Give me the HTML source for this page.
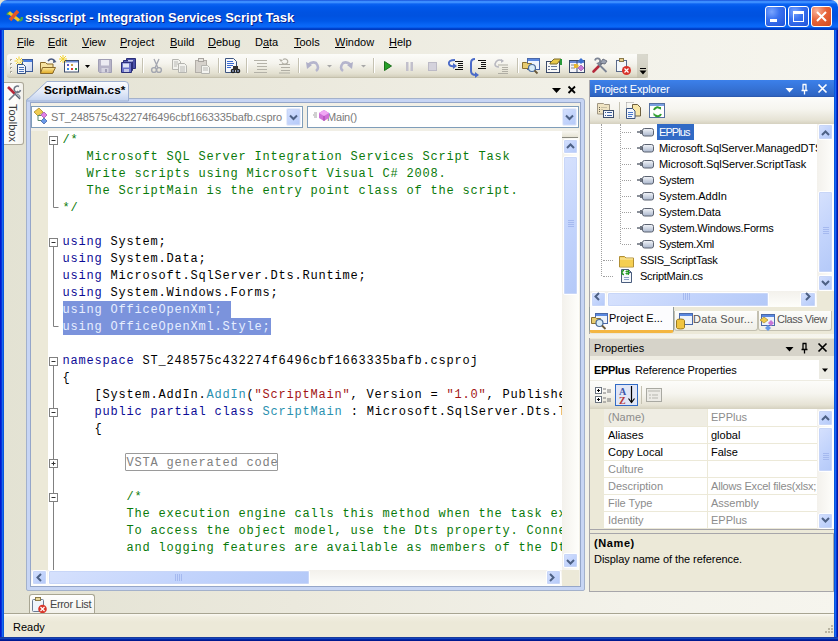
<!DOCTYPE html>
<html><head><meta charset="utf-8">
<style>
*{margin:0;padding:0;box-sizing:border-box}
html,body{width:838px;height:641px;overflow:hidden;background:linear-gradient(to right,#e3e2d3 0,#ebe9dd 35%,#f3f2ea 75%,#f6f5ee 100%)}
body{position:relative;font-family:"Liberation Sans",sans-serif;font-size:11px;color:#000}
.a{position:absolute}
.t{position:absolute;white-space:pre;line-height:11px;font-size:11px}
/* title bar */
#tb{left:0;top:0;width:838px;height:30px;border-radius:7px 7px 0 0;
background:linear-gradient(to bottom,#0a3bcc 0px,#3b8dff 1px,#3c8eff 2.5px,#0b63f2 4px,#0058ea 7px,#0053e2 12px,#0052e0 16px,#0058e8 21px,#0866f6 25px,#0a68f8 27px,#0043cf 28.5px,#0038b8 30px)}
#tt{left:25px;top:11px;font-size:13px;line-height:13px;font-weight:bold;color:#fff;text-shadow:1px 1px 0 #0a1e8a}
.wb{top:6px;width:21px;height:21px;border:1px solid #fff;border-radius:3px;
background:radial-gradient(circle at 30% 25%,#7aa5ff 0,#3a72f0 40%,#1f52d8 100%)}
#bl{left:0;top:30px;width:4px;height:611px;background:linear-gradient(to right,#0019cf 0,#0019cf 1px,#0831d9 1px,#0831d9 2px,#166aee 2px,#166aee 3px,#0855dd 3px)}
#br{left:834px;top:30px;width:4px;height:611px;background:linear-gradient(to right,#0855dd 0,#0855dd 1px,#166aee 1px,#166aee 2px,#0831d9 2px,#0831d9 3px,#001ca0 3px)}
#bb{left:0;top:637px;width:838px;height:4px;background:linear-gradient(to bottom,#1a3c9e 0,#1a3c9e 1px,#1244bc 1px,#1244bc 2px,#0224a4 2px,#0224a4 3px,#001890 3px)}
/* code */
#code{left:62.5px;top:131px;width:499.5px;height:438px;overflow:hidden;font-family:"Liberation Mono",monospace;font-size:12px;letter-spacing:0.8px;line-height:18px;white-space:pre;color:#000}
.c{color:#0a7a0a}.k{color:#0c0c96}.s{color:#a31515}.ty{color:#2b91af}
.sel{background:#7b93dc;color:#e6eeff;display:inline-block;height:17px;vertical-align:top}
.ln{height:17px;overflow:visible}
.sb{position:absolute;border-radius:2px;border:1px solid #fff;background:linear-gradient(135deg,#d6e1fd 0%,#c3d4fc 50%,#b4c9f8 100%);box-shadow:inset 0 0 0 1px #c8d6f8}
</style></head><body>
<!-- title bar -->
<div id="tb" class="a"></div>
<div id="tt" class="t">ssisscript - Integration Services Script Task</div>
<div class="a wb" style="left:765px"></div>
<div class="a wb" style="left:788px"></div>
<div class="a wb" style="left:811px;background:radial-gradient(circle at 25% 20%,#f8b49c 0,#e8643a 45%,#d24a1e 100%)"></div>
<svg class="a" style="left:765px;top:6px" width="68" height="21">
 <rect x="5" y="13" width="7" height="3" fill="#fff"/>
 <rect x="28.5" y="5.5" width="10" height="10" fill="none" stroke="#fff"/><rect x="28" y="5" width="11" height="3" fill="#fff"/>
 <path d="M52,6 l9,9 M61,6 l-9,9" stroke="#fff" stroke-width="2"/>
</svg>
<div id="bl" class="a"></div><div id="br" class="a"></div><div id="bb" class="a"></div>

<!-- menu bar -->

<div class="t" style="left:17px;top:37px">File</div>
<div class="t" style="left:48px;top:37px">Edit</div>
<div class="t" style="left:82px;top:37px">View</div>
<div class="t" style="left:120px;top:37px">Project</div>
<div class="t" style="left:170px;top:37px">Build</div>
<div class="t" style="left:208px;top:37px">Debug</div>
<div class="t" style="left:255px;top:37px">Data</div>
<div class="t" style="left:294px;top:37px">Tools</div>
<div class="t" style="left:335px;top:37px">Window</div>
<div class="t" style="left:389px;top:37px">Help</div>

<div class="a" style="left:17px;top:47px;width:6.5px;height:1px;background:#000"></div><div class="a" style="left:48px;top:47px;width:7px;height:1px;background:#000"></div><div class="a" style="left:82px;top:47px;width:7px;height:1px;background:#000"></div><div class="a" style="left:120px;top:47px;width:7px;height:1px;background:#000"></div><div class="a" style="left:170px;top:47px;width:7px;height:1px;background:#000"></div><div class="a" style="left:208px;top:47px;width:8px;height:1px;background:#000"></div><div class="a" style="left:263px;top:47px;width:6px;height:1px;background:#000"></div><div class="a" style="left:294px;top:47px;width:6.5px;height:1px;background:#000"></div><div class="a" style="left:335px;top:47px;width:10px;height:1px;background:#000"></div><div class="a" style="left:389px;top:47px;width:8px;height:1px;background:#000"></div>
<svg class="a" style="left:5px;top:8px" width="18" height="16">
<path d="M2.5,7 q1,-3 3,-2" stroke="#4aa84a" stroke-width="2.5" fill="none"/>
<path d="M14,12 q3,1 3,-3" stroke="#4aa84a" stroke-width="2.5" fill="none"/>
<path d="M4,4.5 l10,8" stroke="#f0c828" stroke-width="3.2"/>
<path d="M5,12 l8,-9" stroke="#e0582a" stroke-width="3.4"/>
</svg>
<!-- toolbar strip -->
<div class="a" style="left:7px;top:54px;width:641px;height:24px;border-radius:3px 4px 4px 3px;background:linear-gradient(to bottom,#fcfcf9 0,#f5f4ee 40%,#e3e0d0 85%,#d3cfbc 100%);border-bottom:1px solid #c4c0ac"></div>

<svg class="a" style="left:0;top:54px" width="660" height="24">
<defs>
 <linearGradient id="fy" x1="0" y1="0" x2="0" y2="1"><stop offset="0" stop-color="#fbe9a0"/><stop offset="1" stop-color="#e0a820"/></linearGradient>
 <linearGradient id="wg" x1="0" y1="0" x2="1" y2="1"><stop offset="0" stop-color="#ffffff"/><stop offset="1" stop-color="#c8d4ee"/></linearGradient>
</defs>
<!-- grip -->
<g fill="#a8a698"><rect x="10" y="5" width="2" height="2"/><rect x="10" y="9" width="2" height="2"/><rect x="10" y="13" width="2" height="2"/><rect x="10" y="17" width="2" height="2"/></g>
<g fill="#fff"><rect x="11" y="6" width="1" height="1"/><rect x="11" y="10" width="1" height="1"/><rect x="11" y="14" width="1" height="1"/><rect x="11" y="18" width="1" height="1"/></g>
<!-- new project -->
<rect x="22.5" y="5.5" width="10" height="12" fill="url(#wg)" stroke="#3b5a9a"/><rect x="23" y="6" width="9" height="2" fill="#4a7ee0"/>
<path d="M16,4 l6,6 M22,4 l-6,6 M19,2.5 v9 M14.5,7 h9" stroke="#f2d230" stroke-width="1"/><circle cx="19" cy="7" r="1.5" fill="#fff6b0"/>
<path d="M17.5,10.5 h6 l2,2 v7 h-8z" fill="#f2f6fc" stroke="#34507e"/><path d="M19,13.5 h5 M19,15.5 h5 M19,17.5 h5" stroke="#4a70b8"/>
<!-- open -->
<path d="M40.5,8.5 h5 l1.5,1.5 h6 v9 h-12.5z" fill="#f6e2a0" stroke="#8a6a2a"/>
<path d="M42.5,13.5 h13 l-3,6 h-12z" fill="url(#fy)" stroke="#8a6a2a"/>
<path d="M48,7 q3,-4 7,0" stroke="#4a5a80" stroke-width="1.5" fill="none"/><path d="M53.5,5 l3,3 l-3.5,1z" fill="#4a5a80"/>
<!-- add item -->
<rect x="64.5" y="6.5" width="14" height="11.5" fill="#fcfcff" stroke="#3a4a6a"/><rect x="65" y="7" width="13" height="1.5" fill="#6f8fd8"/>
<rect x="67" y="10" width="2" height="2" fill="#5a58c8"/><rect x="71" y="10" width="2" height="2" fill="#c8a048"/><rect x="67" y="14" width="2" height="2" fill="#3a8ae0"/><rect x="71" y="14" width="2" height="2" fill="#d83a2a"/><rect x="75" y="14" width="2" height="2" fill="#2a9a4a"/>
<path d="M60,2 l6,6 M66,2 l-6,6 M63,1 v8 M59,5 h8" stroke="#f2d230" stroke-width="1"/>
<path d="M85,11 h5 l-2.5,3z" fill="#000"/>
<!-- save disabled -->
<path d="M98.5,5.5 h13 v13 h-12 l-1,-1z" fill="#b7b4c8" stroke="#a09eb4"/><rect x="101" y="6" width="8" height="5.5" fill="#ecebf2"/><rect x="101.5" y="14" width="7" height="4.5" fill="#d6d4e0"/><rect x="105" y="15" width="2" height="3" fill="#a09eb4"/>
<!-- save all -->
<path d="M126.5,4.5 h9 v10 h-9z" fill="#4a50a8" stroke="#2a2e78"/><path d="M123.5,6.5 h9 v10 h-9z" fill="#5a60b8" stroke="#2a2e78"/><path d="M121.5,8.5 h10 v10 h-10z" fill="#6a72c8" stroke="#2a2e78"/>
<rect x="123" y="9.5" width="6" height="4" fill="#dfe4f6"/><rect x="124" y="15" width="5" height="3" fill="#c4c8e8"/><rect x="128" y="6" width="5" height="1.5" fill="#c8ccec"/>
<!-- sep -->
<g fill="#c5c2b2"><rect x="142" y="4" width="1" height="15"/><rect x="218" y="4" width="1" height="15"/><rect x="246" y="4" width="1" height="15"/><rect x="298" y="4" width="1" height="15"/><rect x="373" y="4" width="1" height="15"/><rect x="517" y="4" width="1" height="15"/></g>
<g fill="#fff"><rect x="143" y="4" width="1" height="15"/><rect x="219" y="4" width="1" height="15"/><rect x="247" y="4" width="1" height="15"/><rect x="299" y="4" width="1" height="15"/><rect x="374" y="4" width="1" height="15"/><rect x="518" y="4" width="1" height="15"/></g>
<!-- cut -->
<path d="M154,5 l4,9 M159,5 l-4,9" stroke="#a3a6b0" stroke-width="1.3"/><circle cx="154" cy="16" r="2.4" fill="none" stroke="#a3a6b0" stroke-width="1.4"/><circle cx="159" cy="16" r="2.4" fill="none" stroke="#a3a6b0" stroke-width="1.4"/>
<!-- copy -->
<path d="M172.5,5.5 h6 l2,2 v8 h-8z" fill="#f2f2ee" stroke="#b5b5b0"/><path d="M178.5,9.5 h6 l2,2 v7 h-8z" fill="#f2f2ee" stroke="#b5b5b0"/><path d="M174,8 h4 M174,10 h4 M174,12 h3 M180,13 h5 M180,15 h5 M180,17 h5" stroke="#b8b8b4"/>
<!-- paste -->
<rect x="195.5" y="6.5" width="11" height="12" fill="#d6d2cc" stroke="#b2aea8"/><rect x="198.5" y="4.5" width="5" height="3" fill="#e8e6e0" stroke="#a8a4a0"/><path d="M201.5,11.5 h6 l2,2 v6 h-8z" fill="#f4f4f0" stroke="#b5b5b0"/><path d="M203,14 h5 M203,16 h5" stroke="#b8b8b4"/>
<!-- find in files -->
<path d="M225.5,4.5 h8 l3,3 v11 h-11z" fill="#f6f8fc" stroke="#3d5580"/><path d="M227,7.5 h6 M227,9.5 h7 M227,11.5 h6 M227,13.5 h4" stroke="#3a6ad0" stroke-width="1"/>
<circle cx="233" cy="17" r="2.3" fill="#222"/><circle cx="238" cy="17" r="2.3" fill="#222"/><rect x="233" y="12" width="5" height="4" fill="#333"/><circle cx="233" cy="17" r="1" fill="#8a9ac0"/><circle cx="238" cy="17" r="1" fill="#8a9ac0"/>
<!-- comment -->
<path d="M254,6.5 h13 M257,9.5 h10 M257,12.5 h10 M257,15.5 h10 M254,18.5 h13" stroke="#b4b2a8" stroke-width="1"/>
<!-- uncomment -->
<path d="M283,5.5 a3,2.5 0 1 1 -1,3" stroke="#b0aea4" stroke-width="1.2" fill="none"/><path d="M279,5 l2,3 l2,-2z" fill="#b0aea4"/><path d="M279,10.5 h11 M281,13.5 h9 M281,16.5 h9 M279,19 h11" stroke="#b0aea4" stroke-width="1.2"/>
<!-- undo / redo -->
<path d="M316,17 q4,-3 0,-8 q-4,-2 -8,2" stroke="#b5b5cd" stroke-width="2.6" fill="none"/><path d="M306,8 l1,7 l5,-4z" fill="#b0b0c8"/>
<path d="M327,11 h5 l-2.5,2.5z" fill="#a8a8a8"/>
<path d="M343,17 q-4,-3 0,-8 q4,-2 8,2" stroke="#b5b5cd" stroke-width="2.6" fill="none"/><path d="M353,8 l-1,7 l-5,-4z" fill="#b0b0c8"/>
<path d="M361,11 h5 l-2.5,2.5z" fill="#a8a8a8"/>
<!-- play pause stop -->
<path d="M384.5,7.5 l7,4.5 l-7,4.5z" fill="#26a028" stroke="#1a6e1a"/>
<rect x="406" y="8" width="2.5" height="9" fill="#c2c0cc"/><rect x="410.5" y="8" width="2.5" height="9" fill="#c2c0cc"/>
<rect x="428.5" y="8.5" width="8" height="8" fill="#d4d2dc" stroke="#bcbac6"/>
<!-- step into -->
<path d="M455,6 q-7,0 -6,4 q1,3 6,2" stroke="#4a6ac8" stroke-width="2" fill="none"/><path d="M453,9 l4,3 l-4,3z" fill="#4a6ac8"/>
<path d="M455,7.5 h8 M458,9.5 h5 M458,11.5 h5 M458,13.5 h5 M455,15.5 h8" stroke="#111" stroke-width="1"/>
<!-- step over -->
<path d="M475,5 q-4,0 -4,4 v8 q0,4 5,4" stroke="#4a6ac8" stroke-width="2" fill="none"/><path d="M475,18 l4,3 l-4,3z" fill="#4a6ac8"/>
<path d="M478,6.5 h8 M481,8.5 h5 M481,10.5 h5 M481,12.5 h5 M478,14.5 h8" stroke="#111" stroke-width="1"/>
<!-- step out disabled -->
<path d="M503,7 q-6,-3 -8,3 q0,3 4,3" stroke="#b8b8c0" stroke-width="1.6" fill="none"/><path d="M501,5 l3,2 l-3,2z" fill="#b8b8c0"/>
<path d="M498,11 h10 M502,13.5 h6 M502,15.5 h6 M502,17.5 h6 M498,19.5 h10" stroke="#b0aea4" stroke-width="1.2"/>
<!-- solution explorer -->
<rect x="527.5" y="4.5" width="12" height="11" fill="#f0f4fc" stroke="#4a68a8"/><rect x="528" y="5" width="11" height="2" fill="#5a88e0"/>
<path d="M522.5,8.5 h4 l1,1 h4 v5 h-9z" fill="#e8cc70" stroke="#8a7030"/>
<circle cx="532" cy="14" r="3.5" fill="#d8ecf8" stroke="#4a6a9a" stroke-width="1.2"/><path d="M534.5,16.5 l3,3" stroke="#6a5a3a" stroke-width="1.8"/>
<!-- properties -->
<rect x="546.5" y="7.5" width="13" height="11" fill="#f8f8f8" stroke="#3a4a6a"/><path d="M548,12.5 h2 M551,12.5 h6 M548,15.5 h2 M551,15.5 h6" stroke="#6a7a9a"/>
<path d="M550,9 l4,-4 h7 l-4,5 h-7z" fill="#e8c848" stroke="#7a6a28"/><rect x="560" y="5" width="2" height="6" fill="#2a9a3a"/>
<!-- object browser -->
<rect x="569.5" y="6.5" width="15" height="12" fill="#f4f4fa" stroke="#3a4a6a"/><rect x="570" y="7" width="14" height="2" fill="#6a8ad8"/><path d="M577,7 v11" stroke="#3a4a6a"/>
<path d="M571,11 h4 M571,14 h4" stroke="#8a8a8a"/><path d="M574,10 h3 l2,2 l-2,2 h-3z" fill="#e8b830"/>
<path d="M581,4 l3,3 l-3,3 l-3,-3z" fill="#3a70d0"/><path d="M581,11 l3,3 l-3,3 l-3,-3z" fill="#c878d8" stroke="#8a4a9a" stroke-width="0.6"/>
<!-- toolbox -->
<path d="M593.5,17.5 l6,-6" stroke="#b4283a" stroke-width="2.6" stroke-linecap="round"/>
<path d="M599,12 l3,-3" stroke="#6a7080" stroke-width="1.8"/>
<path d="M600,9 l3,-4 l4,2 l-2,3z" fill="#9aa2b2" stroke="#5a6070" stroke-width="0.8"/>
<path d="M595,6.5 a2.6,2.6 0 1 1 3,3 l8.5,8.5" stroke="#7c8494" stroke-width="1.8" fill="none"/>
<circle cx="596.5" cy="8" r="1" fill="#eee"/>
<!-- error list -->
<rect x="616.5" y="6.5" width="10" height="11" fill="#f4f8fc" stroke="#5a6a8a"/><rect x="619.5" y="4.5" width="4" height="3" fill="#e8d090" stroke="#8a7a4a"/>
<circle cx="626.5" cy="16.5" r="4.5" fill="#d8322a"/><path d="M624.5,14.5 l4,4 M628.5,14.5 l-4,4" stroke="#fff" stroke-width="1.2"/>
<!-- overflow -->
<path d="M637,0 h11 v24 h-11z" fill="#b8b6a4" opacity="0.5"/>
<rect x="640" y="14" width="6" height="1" fill="#000"/><path d="M639.5,16.5 h7 l-3.5,4z" fill="#000"/>
</svg>
<!-- dock bg -->


<!-- editor frame -->
<div class="a" style="left:26px;top:98px;width:559px;height:493px;background:#c7d5f4;border:1px solid #a3b1cb;border-radius:3px 3px 2px 2px"></div>
<div class="a" style="left:30px;top:102px;width:551px;height:485px;background:#f1efe6;border:1px solid #95a6c9"></div>
<!-- doc tab -->
<svg class="a" style="left:25px;top:80px" width="106" height="22">
 <defs><linearGradient id="dt" x1="0" y1="0" x2="0" y2="1"><stop offset="0" stop-color="#fdfdfe"/><stop offset="0.55" stop-color="#e3eaf8"/><stop offset="1" stop-color="#c3d3f0"/></linearGradient></defs>
 <path d="M1,21 L22,1.5 L100,1.5 Q103.5,1.5 103.5,5 L103.5,21 Z" fill="url(#dt)" stroke="#9fb1d2"/>
</svg>
<div class="t" style="left:44px;top:84px;font-weight:bold;font-size:11.8px;line-height:12px">ScriptMain.cs*</div>

<!-- combos -->
<div class="a" style="left:31px;top:106px;width:272px;height:22px;background:#fff;border:1px solid #7f9db9"></div>
<div class="a" style="left:307px;top:106px;width:272px;height:22px;background:#fff;border:1px solid #7f9db9"></div>
<div class="t" style="left:51px;top:112px;color:#7a7a7a;letter-spacing:-0.11px">ST_248575c432274f6496cbf1663335bafb.cspro</div>
<div class="t" style="left:327px;top:112px;color:#7a7a7a;letter-spacing:-0.2px">Main()</div>


<!-- toolbox tab -->
<div class="a" style="left:4px;top:82px;width:20px;height:63px;background:linear-gradient(to right,#f9f9f6,#fdfdfb 60%,#f1f0ea);border:1px solid #aca899;border-left:none;border-radius:0 3px 3px 0"></div>
<svg class="a" style="left:5px;top:84px" width="17" height="18">
 <path d="M3,3 l7,7" stroke="#b8283a" stroke-width="2.6"/><path d="M10,10 l5,5" stroke="#556070" stroke-width="1.4"/>
 <path d="M14,2.5 a3.2,3.2 0 1 0 1.5,3.5 M13,7 l-9,9" stroke="#707a88" stroke-width="1.6" fill="none"/>
 <path d="M12,10 q3,1 3,4" stroke="#8a94a4" stroke-width="1.2" fill="none"/>
</svg>
<div class="t" style="left:18px;top:104px;transform:rotate(90deg);transform-origin:0 0;color:#3a3a3a">Toolbox</div>

<!-- combo icons & buttons -->
<svg class="a" style="left:31px;top:106px" width="550" height="22">
 <path d="M3,6 l5,-4 l4,4 l-5,4z" fill="#f0cc50" stroke="#a88a28" stroke-width="0.8"/>
 <path d="M10,9.5 h-3 v5 h3" stroke="#5a8a6a" fill="none"/>
 <path d="M13,6 l3,3 l-3,3 l-3,-3z" fill="#e080e8" stroke="#9a4aa0" stroke-width="0.7"/>
 <path d="M13,12 l3,3 l-3,3 l-3,-3z" fill="#6a9ae8" stroke="#3a5aa0" stroke-width="0.7"/>
 <path d="M283,7 h3 M282,9 h4 M283,11 h3" stroke="#8a8a8a" stroke-width="0.8"/>
 <path d="M288,7 l5,-3 l5,3 v5 l-5,3 l-5,-3z" fill="#d070d8"/><path d="M288,7 l5,3 l5,-3 l-5,-3z" fill="#f0a8f4"/><path d="M293,10 v5" stroke="#9a3aa0" stroke-width="0.8"/>
</svg>
<div class="sb" style="left:286px;top:108px;width:15px;height:18px;border-color:#e8eefc"></div>
<div class="sb" style="left:562px;top:108px;width:15px;height:18px;border-color:#e8eefc"></div>
<svg class="a" style="left:286px;top:108px" width="292" height="18">
 <path d="M4,7.5 l3.5,3.5 l3.5,-3.5" stroke="#4d6185" stroke-width="2" fill="none"/>
 <path d="M280,7.5 l3.5,3.5 l3.5,-3.5" stroke="#4d6185" stroke-width="2" fill="none"/>
</svg>
<!-- doc well dropdown & close -->
<svg class="a" style="left:550px;top:84px" width="30" height="12">
 <path d="M2,4 h9 l-4.5,5z" fill="#000"/>
 <path d="M18.5,2.5 l6.5,6.5 M25,2.5 l-6.5,6.5" stroke="#000" stroke-width="1.8"/>
</svg>
<!-- splitter above v scrollbar -->
<div class="a" style="left:562px;top:131px;width:16px;height:7px;background:linear-gradient(#f8f7f2,#e6e3d4);border-bottom:1px solid #8a8a80"></div>

<!-- gutter & code bg -->
<div class="a" style="left:31px;top:131px;width:17px;height:439px;background:#ece9d8"></div>
<div class="a" style="left:48px;top:131px;width:514px;height:439px;background:#fff"></div>

<div id="code" class="a"><div class="ln c">/*</div><div class="ln c">   Microsoft SQL Server Integration Services Script Task</div><div class="ln c">   Write scripts using Microsoft Visual C# 2008.</div><div class="ln c">   The ScriptMain is the entry point class of the script.</div><div class="ln c">*/</div><div class="ln"> </div><div class="ln"><span class="k">using</span> System;</div><div class="ln"><span class="k">using</span> System.Data;</div><div class="ln"><span class="k">using</span> Microsoft.SqlServer.Dts.Runtime;</div><div class="ln"><span class="k">using</span> System.Windows.Forms;</div><div class="ln"><span class="sel">using OfficeOpenXml; </span></div><div class="ln"><span class="sel">using OfficeOpenXml.Style;</span></div><div class="ln"> </div><div class="ln"><span class="k">namespace</span> ST_248575c432274f6496cbf1663335bafb.csproj</div><div class="ln">{</div><div class="ln">    [System.AddIn.<span class="ty">AddIn</span>(<span class="s">"ScriptMain"</span>, Version = <span class="s">"1.0"</span>, Publisher = <span class="s">"SSIS"</span>)]</div><div class="ln">    <span class="k">public</span> <span class="k">partial</span> <span class="k">class</span> <span class="ty">ScriptMain</span> : Microsoft.SqlServer.Dts.Tasks.ScriptTask.VSTARTScriptObjectModelBase</div><div class="ln">    {</div><div class="ln"> </div><div class="ln">        <span style="color:#808080">VSTA generated code</span></div><div class="ln"> </div><div class="ln c">        /*</div><div class="ln c">        The execution engine calls this method when the task executes.</div><div class="ln c">        To access the object model, use the Dts property. Connections, variables, events,</div><div class="ln c">        and logging features are available as members of the Dts property as shown in the following examples.</div></div>
<div class="a" style="left:125px;top:453px;width:153px;height:18px;border:1px solid #9a9a9a;border-radius:1px"></div>

<!-- scrollbars editor -->
<div class="a" style="left:562px;top:138px;width:17px;height:432px;background:linear-gradient(to right,#f3f1ec,#fefefb)"></div>
<div class="a" style="left:562px;top:131px;width:16px;height:7px;background:linear-gradient(#f8f7f2,#e6e3d4);border-bottom:1px solid #8a8a80"></div>
<div class="a" style="left:31px;top:570px;width:531px;height:16px;background:linear-gradient(#f3f1ec,#fefefb)"></div>
<div class="a" style="left:562px;top:570px;width:17px;height:16px;background:#ece9d8"></div>
<div class="sb" style="left:563px;top:139px;width:15px;height:15px"></div>
<div class="sb" style="left:563px;top:156px;width:15px;height:139px"></div>
<div class="sb" style="left:563px;top:553px;width:15px;height:15px"></div>
<div class="sb" style="left:32px;top:570px;width:15px;height:15px"></div>
<div class="sb" style="left:48px;top:570px;width:262px;height:15px"></div>
<div class="sb" style="left:546px;top:570px;width:15px;height:15px"></div>
<svg class="a" style="left:31px;top:138px" width="548" height="448">
 <path d="M536,10 l3.5,-3.5 l3.5,3.5" stroke="#4d6185" stroke-width="2" fill="none"/>
 <path d="M536,422 l3.5,3.5 l3.5,-3.5" stroke="#4d6185" stroke-width="2" fill="none"/>
 <path d="M10,443 l-3.5,-3.5 l3.5,-3.5" stroke="#4d6185" stroke-width="2" fill="none"/>
 <path d="M519,436 l3.5,3.5 l-3.5,3.5" stroke="#4d6185" stroke-width="2" fill="none"/>
 <path d="M537,82.5 h6 M537,84.5 h6 M537,86.5 h6 M537,88.5 h6" stroke="#a5b9ef" stroke-width="1"/>
 <path d="M144.5,436 v7 M146.5,436 v7 M148.5,436 v7 M150.5,436 v7" stroke="#a5b9ef" stroke-width="1"/>
</svg>
<!-- gutter outline -->
<svg class="a" style="left:48px;top:131px" width="14" height="439">
 <g stroke="#808080" fill="#fff">
  <rect x="1.5" y="5.5" width="8" height="8"/><rect x="1.5" y="107.5" width="8" height="8"/><rect x="1.5" y="226.5" width="8" height="8"/>
  <rect x="1.5" y="277.5" width="8" height="8"/><rect x="1.5" y="328.5" width="8" height="8"/><rect x="1.5" y="362.5" width="8" height="8"/>
 </g>
 <path d="M3.5,9.5 h4 M3.5,111.5 h4 M3.5,230.5 h4 M3.5,281.5 h4 M3.5,332.5 h4 M5.5,330.5 v4 M3.5,366.5 h4" stroke="#333"/>
 <path d="M5.5,14 v62.5 h5 M5.5,116 v79.5 h5 M5.5,235 v42 M5.5,286 v42 M5.5,337 v25 M5.5,371 v68" stroke="#808080" fill="none"/>
</svg>

<!-- error list tab & status -->
<div class="a" style="left:29px;top:594px;width:66px;height:21px;background:linear-gradient(#fefefe,#f2f1ea);border:1px solid #a8a592;border-bottom:none;border-radius:3px 3px 0 0"></div>
<div class="t" style="left:50px;top:599px;color:#444;letter-spacing:-0.35px">Error List</div>
<svg class="a" style="left:31px;top:596px" width="18" height="18">
 <rect x="1.5" y="3.5" width="11" height="12" rx="1" fill="#eef4fb" stroke="#6a7a92"/><rect x="4.5" y="1.5" width="5" height="3" fill="#e8d89a" stroke="#8a7a4a"/>
 <circle cx="11.5" cy="13" r="4.3" fill="#d8362a"/><path d="M9.5,11 l4,4 M13.5,11 l-4,4" stroke="#fff" stroke-width="1.2"/>
</svg>
<div class="a" style="left:4px;top:613px;width:830px;height:24px;background:linear-gradient(#a8a592 0,#a8a592 1px,#fbfaf4 1px,#f1eee0 4px,#ece9d8 9px,#ece9d8 100%)"></div>
<div class="t" style="left:13px;top:622px">Ready</div>

<!-- project explorer -->
<div class="a" style="left:589px;top:80px;width:245px;height:254px;background:#fff;border-left:1px solid #a7a6aa"></div>
<div class="a" style="left:590px;top:80px;width:244px;height:17px;background:linear-gradient(#3c80ea 0,#3674d8 45%,#3066c4 90%,#2a55a8 100%)"></div>
<div class="t" style="left:594px;top:84px;color:#fff;letter-spacing:-0.18px">Project Explorer</div>
<svg class="a" style="left:784px;top:83px" width="46" height="12"><path d="M1.5,5 h8 l-4,4.5z" fill="#fff"/><path d="M19,1.5 v6 M22,1.5 v6 M17.5,7.5 h6 M20.5,7.5 v4 M18.5,1.5 h4" stroke="#fff" stroke-width="1.3" fill="none"/><path d="M34.5,1.5 l8,8 M42.5,1.5 l-8,8" stroke="#fff" stroke-width="1.7"/></svg>
<div class="a" style="left:590px;top:97px;width:244px;height:27px;background:linear-gradient(#fcfcfa 0,#f6f5ef 45%,#e6e3d5 85%,#d5d1bf 100%)"></div>
<div class="a" style="left:619px;top:102px;width:1px;height:17px;background:#c5c2b2"></div>
<svg class="a" style="left:596px;top:101px" width="72" height="18">
 <path d="M1.5,2.5 h6 l1,1 h5 v9.5 h-12z" fill="#efe3c2" stroke="#a09682"/><path d="M3,6.5 h1 M3,8.5 h1 M3,10.5 h1" stroke="#6a6454"/><path d="M5,6.5 h6 M5,8.5 h2" stroke="#c8bfa4"/>
 <rect x="7.5" y="9.5" width="10" height="7" fill="#f4f7fc" stroke="#3d4e6a"/><path d="M9,11.5 h1 M11,11.5 h5 M9,14.5 h1 M11,14.5 h5" stroke="#3d5f9c"/>
 <path d="M30.5,1.5 v7 M30.5,1.5 h7" stroke="#9a9a9a" stroke-dasharray="1 1"/><path d="M36.5,3.5 h5 l3,3 v8.5 h-8z" fill="#f8e6a6" stroke="#6e6040"/><path d="M30.5,7.5 h6 l2.5,2.5 v7.5 h-8.5z" fill="#f2f6fc" stroke="#3d5580"/><path d="M32,11.5 h5 M32,13.5 h5 M32,15.5 h4" stroke="#4a78c8"/>
 <rect x="53.5" y="2.5" width="15" height="14" fill="#fff" stroke="#56709f"/><rect x="54" y="3" width="14" height="2" fill="#7aa0e0"/>
 <path d="M58,9 a3.5,3.5 0 0 1 6,-1.5 M65,13 a3.5,3.5 0 0 1 -6,1" stroke="#2e9e2e" stroke-width="2" fill="none"/><path d="M62.5,6 l2.5,0 l0,3z M60,14.5 l-2.5,0 l0,-3z" fill="#2e9e2e"/>
</svg>
<!-- tree -->
<div class="a" style="left:601px;top:124px;width:1px;height:152px;border-left:1px dotted #a0a0a0"></div>
<div class="a" style="left:620px;top:124px;width:1px;height:120px;border-left:1px dotted #a0a0a0"></div>
<div id="tree"></div>
<div class="a" style="left:657px;top:124px;width:37px;height:16px;background:#316ac5"></div>
<div class="a" style="left:622px;top:132px;width:9px;height:1px;border-top:1px dotted #a0a0a0"></div><svg class="a" style="left:636px;top:127px" width="19" height="10"><rect x="1" y="4" width="3" height="2" fill="#8a8f98"/><rect x="4" y="3" width="2" height="4" fill="#6e7480"/><rect x="6.5" y="1.5" width="11" height="7.5" rx="2" fill="url(#rg)" stroke="#5b6270"/></svg><div class="t" style="left:659px;top:127px;color:#fff;letter-spacing:-0.92px">EPPlus</div>
<div class="a" style="left:622px;top:148px;width:9px;height:1px;border-top:1px dotted #a0a0a0"></div><svg class="a" style="left:636px;top:143px" width="19" height="10"><rect x="1" y="4" width="3" height="2" fill="#8a8f98"/><rect x="4" y="3" width="2" height="4" fill="#6e7480"/><rect x="6.5" y="1.5" width="11" height="7.5" rx="2" fill="url(#rg)" stroke="#5b6270"/></svg><div class="t" style="left:659px;top:143px;color:#000;letter-spacing:-0.1px">Microsoft.SqlServer.ManagedDTS</div>
<div class="a" style="left:622px;top:164px;width:9px;height:1px;border-top:1px dotted #a0a0a0"></div><svg class="a" style="left:636px;top:159px" width="19" height="10"><rect x="1" y="4" width="3" height="2" fill="#8a8f98"/><rect x="4" y="3" width="2" height="4" fill="#6e7480"/><rect x="6.5" y="1.5" width="11" height="7.5" rx="2" fill="url(#rg)" stroke="#5b6270"/></svg><div class="t" style="left:659px;top:159px;color:#000;letter-spacing:-0.07px">Microsoft.SqlServer.ScriptTask</div>
<div class="a" style="left:622px;top:180px;width:9px;height:1px;border-top:1px dotted #a0a0a0"></div><svg class="a" style="left:636px;top:175px" width="19" height="10"><rect x="1" y="4" width="3" height="2" fill="#8a8f98"/><rect x="4" y="3" width="2" height="4" fill="#6e7480"/><rect x="6.5" y="1.5" width="11" height="7.5" rx="2" fill="url(#rg)" stroke="#5b6270"/></svg><div class="t" style="left:659px;top:175px;color:#000;letter-spacing:-0.3px">System</div>
<div class="a" style="left:622px;top:196px;width:9px;height:1px;border-top:1px dotted #a0a0a0"></div><svg class="a" style="left:636px;top:191px" width="19" height="10"><rect x="1" y="4" width="3" height="2" fill="#8a8f98"/><rect x="4" y="3" width="2" height="4" fill="#6e7480"/><rect x="6.5" y="1.5" width="11" height="7.5" rx="2" fill="url(#rg)" stroke="#5b6270"/></svg><div class="t" style="left:659px;top:191px;color:#000;letter-spacing:-0.06px">System.AddIn</div>
<div class="a" style="left:622px;top:212px;width:9px;height:1px;border-top:1px dotted #a0a0a0"></div><svg class="a" style="left:636px;top:207px" width="19" height="10"><rect x="1" y="4" width="3" height="2" fill="#8a8f98"/><rect x="4" y="3" width="2" height="4" fill="#6e7480"/><rect x="6.5" y="1.5" width="11" height="7.5" rx="2" fill="url(#rg)" stroke="#5b6270"/></svg><div class="t" style="left:659px;top:207px;color:#000;letter-spacing:-0.12px">System.Data</div>
<div class="a" style="left:622px;top:228px;width:9px;height:1px;border-top:1px dotted #a0a0a0"></div><svg class="a" style="left:636px;top:223px" width="19" height="10"><rect x="1" y="4" width="3" height="2" fill="#8a8f98"/><rect x="4" y="3" width="2" height="4" fill="#6e7480"/><rect x="6.5" y="1.5" width="11" height="7.5" rx="2" fill="url(#rg)" stroke="#5b6270"/></svg><div class="t" style="left:659px;top:223px;color:#000;letter-spacing:-0.2px">System.Windows.Forms</div>
<div class="a" style="left:622px;top:244px;width:9px;height:1px;border-top:1px dotted #a0a0a0"></div><svg class="a" style="left:636px;top:239px" width="19" height="10"><rect x="1" y="4" width="3" height="2" fill="#8a8f98"/><rect x="4" y="3" width="2" height="4" fill="#6e7480"/><rect x="6.5" y="1.5" width="11" height="7.5" rx="2" fill="url(#rg)" stroke="#5b6270"/></svg><div class="t" style="left:659px;top:239px;color:#000;letter-spacing:-0.39px">System.Xml</div>
<svg width="0" height="0" style="position:absolute"><defs><linearGradient id="rg" x1="0" y1="0" x2="0" y2="1"><stop offset="0" stop-color="#f4f6fa"/><stop offset="1" stop-color="#a9b6cc"/></linearGradient></defs></svg>
<div class="a" style="left:603px;top:260px;width:10px;height:1px;border-top:1px dotted #a0a0a0"></div>
<div class="a" style="left:603px;top:276px;width:10px;height:1px;border-top:1px dotted #a0a0a0"></div>
<svg class="a" style="left:618px;top:253px" width="18" height="32">
 <path d="M1.5,3.5 h5 l1.5,1.5 h7.5 v9 h-14z" fill="#f3d36a" stroke="#b18f35"/><path d="M2,6 h13 v7.5 h-13z" fill="#f5cf52"/><path d="M2,6 h13" stroke="#fbe9a8"/>
 <path d="M3.5,16.5 h7 l3,3 v10 h-10z" fill="#f4f7fb" stroke="#4a5d7e"/><path d="M10.5,16.5 v3 h3" fill="none" stroke="#4a5d7e"/>
 <path d="M6,24.5 h5 M6,26.5 h5" stroke="#8aa0c8"/>
 <path d="M6,17.5 a2,2 0 1 0 0,4" stroke="#1d9a1d" stroke-width="1.3" fill="none"/><path d="M7.5,18.5 h4 M7.5,20.5 h4 M9,17 v5 M10.5,17 v5" stroke="#1d9a1d" stroke-width="0.9"/>
</svg>
<div class="t" style="left:640px;top:255px;letter-spacing:-0.3px">SSIS_ScriptTask</div>
<div class="t" style="left:640px;top:271px;letter-spacing:-0.25px">ScriptMain.cs</div>

<!-- PE scrollbars -->
<div class="a" style="left:817px;top:124px;width:17px;height:167px;background:linear-gradient(to right,#f3f1ec,#fefefb)"></div>
<div class="a" style="left:590px;top:291px;width:227px;height:16px;background:linear-gradient(#f3f1ec,#fefefb)"></div>
<div class="a" style="left:817px;top:291px;width:17px;height:16px;background:#ece9d8"></div>
<div class="sb" style="left:818px;top:124px;width:15px;height:16px"></div>
<div class="sb" style="left:818px;top:191px;width:15px;height:82px"></div>
<div class="sb" style="left:818px;top:275px;width:15px;height:16px"></div>
<div class="sb" style="left:591px;top:292px;width:15px;height:15px"></div>
<div class="sb" style="left:607px;top:292px;width:162px;height:15px"></div>
<div class="sb" style="left:800px;top:292px;width:16px;height:15px"></div>
<svg class="a" style="left:590px;top:124px" width="244" height="184">
 <path d="M232,11 l3.5,-3.5 l3.5,3.5" stroke="#4d6185" stroke-width="2" fill="none"/>
 <path d="M232,157 l3.5,3.5 l3.5,-3.5" stroke="#4d6185" stroke-width="2" fill="none"/>
 <path d="M9,176 l-3.5,-3.5 l3.5,-3.5" stroke="#4d6185" stroke-width="2" fill="none"/>
 <path d="M216,169 l3.5,3.5 l-3.5,3.5" stroke="#4d6185" stroke-width="2" fill="none"/>
 <path d="M233,103.5 h6 M233,105.5 h6 M233,107.5 h6 M233,109.5 h6" stroke="#a5b9ef" stroke-width="1"/>
 <path d="M93.5,169 v7 M95.5,169 v7 M97.5,169 v7 M99.5,169 v7" stroke="#a5b9ef" stroke-width="1"/>
</svg>

<!-- PE bottom tabs -->
<div class="a" style="left:590px;top:307px;width:244px;height:27px;background:#ece9d8"></div>
<div class="a" style="left:674px;top:311px;width:84px;height:20px;background:linear-gradient(#fdfdfb,#f0efe8);border:1px solid #c3c0b0;border-top:none;border-radius:0 0 3px 3px"></div>
<div class="a" style="left:758px;top:311px;width:74px;height:20px;background:linear-gradient(#fdfdfb,#f0efe8);border:1px solid #c3c0b0;border-top:none;border-radius:0 0 3px 3px"></div>
<div class="a" style="left:589px;top:307px;width:85px;height:26px;background:#fcfcfe;border:1px solid #919b9c;border-top:none;border-radius:0 0 3px 3px;border-bottom:3px solid #f4b640"></div>
<svg class="a" style="left:590px;top:310px" width="240" height="22">
 <rect x="5.5" y="3.5" width="12" height="10" fill="#eef3fb" stroke="#4a68a8"/><rect x="6" y="4" width="11" height="2" fill="#5a88e0"/>
 <path d="M1.5,7.5 h4 l1,1 h4 v5 h-9z" fill="#e8cc70" stroke="#8a7030"/>
 <circle cx="9.5" cy="13" r="3.5" fill="#d8ecf8" stroke="#4a6a9a" stroke-width="1.2"/><path d="M12,15.5 l3.5,3.5" stroke="#6a5a3a" stroke-width="1.8"/>
 <rect x="89.5" y="3.5" width="13" height="11" fill="#eef3fb" stroke="#4a68a8"/><rect x="90" y="4" width="12" height="2" fill="#5a88e0"/>
 <path d="M86.5,10.5 a4,1.5 0 0 1 8,0 v7 a4,1.5 0 0 1 -8,0z" fill="#f0c440" stroke="#9a7a20"/>
 <rect x="171.5" y="4.5" width="13" height="11" fill="#eef3fb" stroke="#4a68a8"/><rect x="172" y="5" width="12" height="2" fill="#5a88e0"/>
 <path d="M170,10 l4,-3 l4,3 l-4,3z" fill="#f0cc50" stroke="#a88a28" stroke-width="0.7"/><path d="M181,10 l3,3 l-3,3 l-3,-3z" fill="#c878d8"/><path d="M178,15 l3,3 l-3,3 l-3,-3z" fill="#6a9ae8"/>
</svg>
<div class="t" style="left:609px;top:313px">Project E...</div>
<div class="t" style="left:693px;top:314px;color:#555;letter-spacing:0.2px">Data Sour...</div>
<div class="t" style="left:777px;top:314px;color:#555;letter-spacing:-0.45px">Class View</div>

<!-- properties -->
<div class="a" style="left:589px;top:338px;width:245px;height:254px;background:#ece9d8;border-left:1px solid #a7a6aa"></div>
<div class="a" style="left:590px;top:339px;width:244px;height:17px;background:#d6d3c9"></div>
<div class="t" style="left:594px;top:343px">Properties</div>
<svg class="a" style="left:784px;top:342px" width="46" height="12"><path d="M1.5,5 h8 l-4,4.5z" fill="#000"/><path d="M19,1.5 v6 M22,1.5 v6 M17.5,7.5 h6 M20.5,7.5 v4 M18.5,1.5 h4" stroke="#000" stroke-width="1.3" fill="none"/><path d="M34.5,1.5 l8,8 M42.5,1.5 l-8,8" stroke="#000" stroke-width="1.7"/></svg>
<div class="a" style="left:590px;top:356px;width:244px;height:25px;background:#eeece2"></div><div class="a" style="left:590px;top:360px;width:241px;height:20px;background:#fff"></div><div class="a" style="left:819px;top:360px;width:12px;height:19px;background:#ecebe3"></div>
<div class="t" style="left:594px;top:365px;font-weight:bold;letter-spacing:-0.3px">EPPlus</div>
<div class="t" style="left:635px;top:365px;letter-spacing:-0.12px">Reference Properties</div>
<svg class="a" style="left:818px;top:362px" width="14" height="16"><path d="M4,6.5 h6 l-3,3.5z" fill="#000"/></svg>
<div class="a" style="left:590px;top:381px;width:244px;height:28px;background:linear-gradient(#fcfcfa 0,#f6f5ef 45%,#e6e3d5 85%,#d5d1bf 100%)"></div>
<div class="a" style="left:615px;top:384px;width:23px;height:22px;background:#e1e6f6;border:1px solid #316ac5"></div>
<div class="a" style="left:641px;top:386px;width:1px;height:18px;background:#c5c2b2"></div>
<svg class="a" style="left:590px;top:381px" width="80" height="28">
 <rect x="5.5" y="6.5" width="6" height="6" fill="#fff" stroke="#6b7480"/><path d="M7,9.5 h3 M8.5,8 v3" stroke="#000"/>
 <rect x="5.5" y="15.5" width="6" height="6" fill="#fff" stroke="#6b7480"/><path d="M7,18.5 h3 M8.5,17 v3" stroke="#000"/>
 <path d="M13,8 h3 M17,9 h4 M17,11 h4 M13,12 h3 M13,17 h3 M17,18 h4 M17,20 h4 M13,21 h3" stroke="#7b7b7b"/>
 <text x="29" y="14" font-family="Liberation Serif" font-size="10" font-weight="bold" fill="#3d55a8">A</text>
 <text x="29" y="23" font-family="Liberation Serif" font-size="10" font-weight="bold" fill="#b83a3a">Z</text>
 <path d="M41.5,5 v16 M38.5,17.5 l3,4 l3,-4" stroke="#000" stroke-width="1.2" fill="none"/>
 <rect x="56.5" y="7.5" width="15" height="13" fill="#ecebe6" stroke="#a9a9a2"/><path d="M58,10 h12 M59,14 h2 M62,14 h6 M59,17 h2 M62,17 h6" stroke="#b5b5ae"/>
</svg>
<!-- grid -->
<div class="a" style="left:590px;top:409px;width:227px;height:120px;background:#fff"></div>
<div class="a" style="left:590px;top:409px;width:14px;height:120px;background:#ece9d8"></div>
<div class="a" style="left:604px;top:409px;width:104px;height:17px;background:#efede3"></div>
<div class="a" style="left:604px;top:426px;width:213px;height:1px;background:#ece9d8"></div><div class="t" style="left:608px;top:412px;color:#8c8c8c">(Name)</div><div class="t" style="left:711px;top:412px;color:#8c8c8c">EPPlus</div>
<div class="a" style="left:604px;top:443px;width:213px;height:1px;background:#ece9d8"></div><div class="t" style="left:608px;top:430px;color:#000">Aliases</div><div class="t" style="left:711px;top:430px;color:#000">global</div>
<div class="a" style="left:604px;top:460px;width:213px;height:1px;background:#ece9d8"></div><div class="t" style="left:608px;top:447px;color:#000">Copy Local</div><div class="t" style="left:711px;top:447px;color:#000">False</div>
<div class="a" style="left:604px;top:477px;width:213px;height:1px;background:#ece9d8"></div><div class="t" style="left:608px;top:464px;color:#8c8c8c">Culture</div><div class="t" style="left:711px;top:464px;color:#8c8c8c"></div>
<div class="a" style="left:604px;top:494px;width:213px;height:1px;background:#ece9d8"></div><div class="t" style="left:608px;top:481px;color:#8c8c8c">Description</div><div class="t" style="left:711px;top:481px;color:#8c8c8c"><span style="letter-spacing:-0.2px">Allows Excel files(xlsx;</span></div>
<div class="a" style="left:604px;top:511px;width:213px;height:1px;background:#ece9d8"></div><div class="t" style="left:608px;top:498px;color:#8c8c8c">File Type</div><div class="t" style="left:711px;top:498px;color:#8c8c8c">Assembly</div>
<div class="a" style="left:604px;top:528px;width:213px;height:1px;background:#ece9d8"></div><div class="t" style="left:608px;top:515px;color:#8c8c8c">Identity</div><div class="t" style="left:711px;top:515px;color:#8c8c8c">EPPlus</div>
<div class="a" style="left:707px;top:409px;width:1px;height:120px;background:#ece9d8"></div>
<div class="a" style="left:817px;top:409px;width:17px;height:120px;background:linear-gradient(to right,#f3f1ec,#fefefb)"></div>
<div class="sb" style="left:818px;top:410px;width:15px;height:16px"></div>
<div class="sb" style="left:818px;top:427px;width:15px;height:45px"></div>
<div class="sb" style="left:818px;top:513px;width:15px;height:16px"></div>
<svg class="a" style="left:590px;top:409px" width="244" height="120">
 <path d="M232,11 l3.5,-3.5 l3.5,3.5" stroke="#4d6185" stroke-width="2" fill="none"/>
 <path d="M232,109 l3.5,3.5 l3.5,-3.5" stroke="#4d6185" stroke-width="2" fill="none"/>
 <path d="M233,44.5 h6 M233,46.5 h6 M233,48.5 h6 M233,50.5 h6" stroke="#a5b9ef" stroke-width="1"/>
</svg>
<div class="a" style="left:590px;top:529px;width:244px;height:1px;background:#a7a6aa"></div>
<div class="a" style="left:589px;top:533px;width:245px;height:59px;border:1px solid #a7a6aa;background:#ece9d8"></div>
<div class="t" style="left:594px;top:538px;font-weight:bold;letter-spacing:0.6px">(Name)</div>
<div class="t" style="left:594px;top:554px;letter-spacing:-0.06px">Display name of the reference.</div>
<svg class="a" style="left:822px;top:624px" width="12" height="12"><g fill="#b9b5a2"><rect x="9" y="1" width="2" height="2"/><rect x="6" y="4" width="2" height="2"/><rect x="9" y="4" width="2" height="2"/><rect x="3" y="7" width="2" height="2"/><rect x="6" y="7" width="2" height="2"/><rect x="9" y="7" width="2" height="2"/></g></svg>
</body></html>
